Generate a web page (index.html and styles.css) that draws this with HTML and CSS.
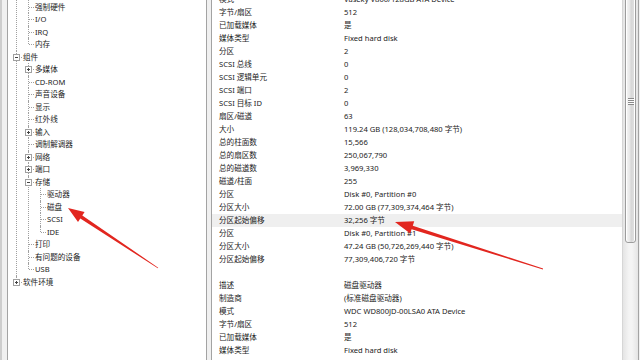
FILE: index.html
```html
<!DOCTYPE html>
<html>

<head>
    <meta charset="UTF-8">
    <title>系统信息</title>
    <link rel="stylesheet" href="styles.css">
</head>

<body>
    <div class="window">
        <div class="tree-pane">
            <ul class="tree">
                <!-- branch scrolled up past the top edge -->
                <li class="cont">
                    <ul>
                        <li><div class="node">强制硬件</div></li>
                        <li><div class="node">I/O</div></li>
                        <li><div class="node">IRQ</div></li>
                        <li><div class="node">内存</div></li>
                    </ul>
                </li>
                <li>
                    <div class="node"><span class="exp minus"></span>组件</div>
                    <ul>
                        <li><div class="node"><span class="exp plus"></span>多媒体</div></li>
                        <li><div class="node">CD-ROM</div></li>
                        <li><div class="node">声音设备</div></li>
                        <li><div class="node">显示</div></li>
                        <li><div class="node">红外线</div></li>
                        <li><div class="node"><span class="exp plus"></span>输入</div></li>
                        <li><div class="node">调制解调器</div></li>
                        <li><div class="node"><span class="exp plus"></span>网络</div></li>
                        <li><div class="node"><span class="exp plus"></span>端口</div></li>
                        <li>
                            <div class="node"><span class="exp minus"></span>存储</div>
                            <ul>
                                <li><div class="node">驱动器</div></li>
                                <li><div class="node">磁盘</div></li>
                                <li><div class="node">SCSI</div></li>
                                <li><div class="node">IDE</div></li>
                            </ul>
                        </li>
                        <li><div class="node">打印</div></li>
                        <li><div class="node">有问题的设备</div></li>
                        <li><div class="node">USB</div></li>
                    </ul>
                </li>
                <li><div class="node"><span class="exp plus"></span>软件环境</div></li>
            </ul>
        </div>

        <div class="splitter"></div>

        <div class="detail-pane">
            <div class="rows">
                <div class="row"><span>模式</span><span>Vaseky V800/128GB ATA Device</span></div>
                <div class="row"><span>字节/扇区</span><span>512</span></div>
                <div class="row"><span>已加载媒体</span><span>是</span></div>
                <div class="row"><span>媒体类型</span><span>Fixed hard disk</span></div>
                <div class="row"><span>分区</span><span>2</span></div>
                <div class="row"><span>SCSI 总线</span><span>0</span></div>
                <div class="row"><span>SCSI 逻辑单元</span><span>0</span></div>
                <div class="row"><span>SCSI 端口</span><span>2</span></div>
                <div class="row"><span>SCSI 目标 ID</span><span>0</span></div>
                <div class="row"><span>扇区/磁道</span><span>63</span></div>
                <div class="row"><span>大小</span><span>119.24 GB (128,034,708,480 字节)</span></div>
                <div class="row"><span>总的柱面数</span><span>15,566</span></div>
                <div class="row"><span>总的扇区数</span><span>250,067,790</span></div>
                <div class="row"><span>总的磁道数</span><span>3,969,330</span></div>
                <div class="row"><span>磁道/柱面</span><span>255</span></div>
                <div class="row"><span>分区</span><span>Disk #0, Partition #0</span></div>
                <div class="row"><span>分区大小</span><span>72.00 GB (77,309,374,464 字节)</span></div>
                <div class="row sel"><span>分区起始偏移</span><span>32,256 字节</span></div>
                <div class="row"><span>分区</span><span>Disk #0, Partition #1</span></div>
                <div class="row"><span>分区大小</span><span>47.24 GB (50,726,269,440 字节)</span></div>
                <div class="row"><span>分区起始偏移</span><span>77,309,406,720 字节</span></div>
                <div class="row"></div>
                <div class="row"><span>描述</span><span>磁盘驱动器</span></div>
                <div class="row"><span>制造商</span><span>(标准磁盘驱动器)</span></div>
                <div class="row"><span>模式</span><span>WDC WD800JD-00LSA0 ATA Device</span></div>
                <div class="row"><span>字节/扇区</span><span>512</span></div>
                <div class="row"><span>已加载媒体</span><span>是</span></div>
                <div class="row"><span>媒体类型</span><span>Fixed hard disk</span></div>
            </div>
            <div class="scrollbar">
                <div class="thumb"><span class="grip"></span></div>
            </div>
        </div>
    </div>

    <!-- red arrows drawn over the screenshot -->
    <svg class="arrows" width="640" height="360" viewBox="0 0 640 360">
        <polygon points="68,208 78,221.9 80.3,218.4 157.8,268.3 158.2,267.7 82.3,215.4 84.6,211.9" />
        <polygon points="395,222 410.2,233.6 411.6,229.2 542.9,269.4 543.1,268.6 412.8,225.7 414.2,221.3" />
    </svg>
</body>

</html>
```

FILE: styles.css
```css
body {
    margin: 0;
    background: #f0f0f0;
    font-family: "Noto Sans", "Noto Sans CJK SC", sans-serif;
    font-size: 7.6px;
    color: #1c1c1c;
}

.window {
    display: flex;
    height: 360px;
    overflow: hidden;
    border-left: 2px solid #cdcdcd;
    padding-left: 5px;
    padding-right: 1px;
}

/* left tree */
.tree-pane {
    width: 200px;
    box-sizing: border-box;
    border-left: 1px solid #a3a3a3;
    border-right: 1px solid #a3a3a3;
    background: #fff;
    overflow: hidden;
}

.tree,
.tree ul {
    list-style: none;
    margin: 0;
    padding: 0;
}

.tree {
    margin: 0.5px 0 0 8px;
}

.tree ul {
    margin-left: 5px;
}

.tree li {
    position: relative;
    padding-left: 7px;
}

.tree li::before {
    content: "";
    position: absolute;
    left: 0;
    top: 0;
    bottom: 0;
    border-left: 1px dotted #a0a0a0;
}

.tree li:last-child::before {
    bottom: auto;
    height: 6px;
}

.tree li::after {
    content: "";
    position: absolute;
    left: 1px;
    top: 6px;
    width: 5px;
    border-top: 1px dotted #a0a0a0;
}

/* the continued branch has no row of its own */
.tree li.cont::after {
    display: none;
}

.tree li.cont::before {
    top: -2px;
}

.tree li.cont > ul > li:first-child::before {
    top: -2px;
}

.node {
    height: 12.5px;
    line-height: 12.5px;
    white-space: nowrap;
}

.exp {
    position: absolute;
    left: -3px;
    top: 3px;
    width: 7px;
    height: 7px;
    box-sizing: border-box;
    border: 1px solid #a0a0a0;
    background: #fff;
    z-index: 1;
}

.exp::before,
.exp.plus::after {
    content: "";
    position: absolute;
    background: #444;
}

.exp::before {
    left: 1px;
    top: 2px;
    width: 3px;
    height: 1px;
}

.exp.plus::after {
    left: 2px;
    top: 1px;
    width: 1px;
    height: 3px;
}

.splitter {
    width: 4px;
}

/* right detail list */
.detail-pane {
    flex: 1;
    display: flex;
    background: #fff;
    border-left: 1px solid #a3a3a3;
    border-right: 1px solid #a3a3a3;
    overflow: hidden;
}

.rows {
    flex: 1;
    margin-top: -7px;
}

.row {
    display: grid;
    grid-template-columns: 125px 1fr;
    height: 13px;
    line-height: 13px;
    padding-left: 7px;
    white-space: nowrap;
}

.row.sel {
    background: #efefef;
}

.scrollbar {
    width: 16px;
    box-sizing: border-box;
    border-left: 1px solid #d6d6d6;
    background: linear-gradient(90deg, #e4e4e4, #f4f4f4 40%, #f4f4f4 60%, #e4e4e4);
}

.thumb {
    margin: -40px 2px 0 2px;
    height: 283px;
    box-sizing: border-box;
    border: 1px solid #9c9c9c;
    border-radius: 3px;
    background: linear-gradient(90deg, #f6f6f6, #e6e6e6 45%, #d6d6d6 55%, #e2e2e2);
    box-shadow: inset 1px 0 #fff, inset -1px 0 #fff;
    display: flex;
    align-items: center;
    justify-content: center;
}

.grip {
    width: 6px;
    height: 7px;
    background: repeating-linear-gradient(180deg, #8a8a8a 0 1px, #fbfbfb 1px 2px);
}

.arrows {
    position: absolute;
    left: 0;
    top: 0;
    pointer-events: none;
}

.arrows polygon {
    fill: #e2261f;
}
```
